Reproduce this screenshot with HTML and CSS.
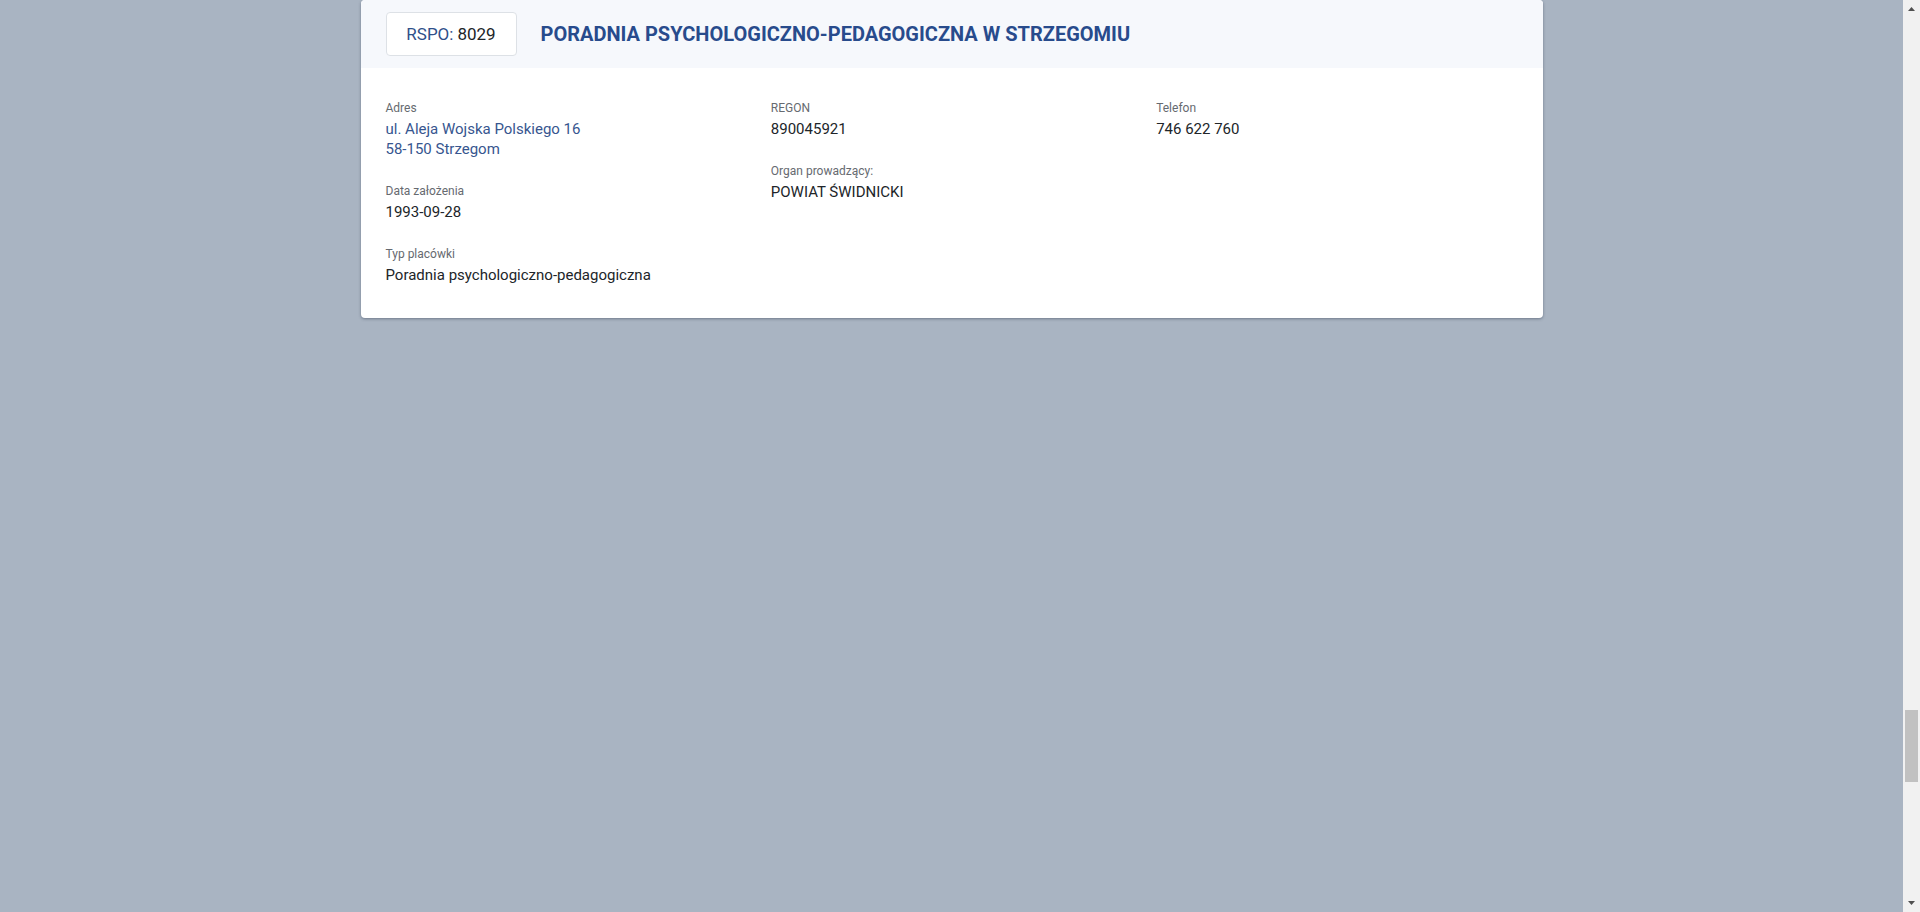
FILE: index.html
```html
<!DOCTYPE html>
<html lang="pl">
<head>
<meta charset="utf-8">
<title>Poradnia Psychologiczno-Pedagogiczna w Strzegomiu</title>
<link rel="stylesheet" href="styles.css">
</head>
<body>
<div class="page">
  <main class="container">
    <article class="card">
      <header class="card-head">
        <div class="rspo"><span class="rspo-label">RSPO:</span> 8029</div>
        <h1 class="title">PORADNIA PSYCHOLOGICZNO-PEDAGOGICZNA W STRZEGOMIU</h1>
      </header>
      <div class="card-body">
        <div class="col">
          <div class="field">
            <div class="label">Adres</div>
            <div class="value link">ul. Aleja Wojska Polskiego 16<br>58-150 Strzegom</div>
          </div>
          <div class="field">
            <div class="label">Data założenia</div>
            <div class="value">1993-09-28</div>
          </div>
          <div class="field">
            <div class="label">Typ placówki</div>
            <div class="value">Poradnia psychologiczno-pedagogiczna</div>
          </div>
        </div>
        <div class="col">
          <div class="field">
            <div class="label">REGON</div>
            <div class="value">890045921</div>
          </div>
          <div class="field">
            <div class="label">Organ prowadzący:</div>
            <div class="value">POWIAT ŚWIDNICKI</div>
          </div>
        </div>
        <div class="col">
          <div class="field">
            <div class="label">Telefon</div>
            <div class="value">746 622 760</div>
          </div>
        </div>
      </div>
    </article>
  </main>
</div>
<div class="scrollbar" aria-hidden="true">
  <div class="sb-btn">
    <svg width="17" height="17" viewBox="0 0 17 17"><path d="M5 11h7L8.5 7z" fill="#505050"/></svg>
  </div>
  <div class="sb-track">
    <div class="sb-thumb"></div>
  </div>
  <div class="sb-btn">
    <svg width="17" height="17" viewBox="0 0 17 17"><path d="M5 6h7L8.5 10z" fill="#505050"/></svg>
  </div>
</div>
</body>
</html>
```
FILE: styles.css
```css
html, body {
  margin: 0;
  padding: 0;
  height: 100%;
  overflow: hidden;
}
body {
  display: flex;
  background: #a9b4c2;
  font-family: Roboto, "Liberation Sans", Arial, sans-serif;
  color: #212529;
}
.page {
  flex: 1;
  min-width: 0;
}
.container {
  width: 1182px;
  margin: 0 auto;
}
.card {
  background: #fff;
  border-radius: 4px;
  box-shadow: 0 1px 3px rgba(40, 50, 70, 0.45);
  overflow: hidden;
}
.card-head {
  display: flex;
  align-items: center;
  gap: 24px;
  padding: 12px 25px;
  background: #f6f8fc;
}
.rspo {
  box-sizing: border-box;
  height: 44px;
  width: 131px;
  display: flex;
  align-items: center;
  justify-content: center;
  gap: 4px;
  border: 1px solid #dde1e6;
  border-radius: 4px;
  background: #fff;
  font-size: 17px;
  color: #212529;
}
.rspo-label {
  color: #2f4f8a;
}
.title {
  margin: 0;
  font-size: 20px;
  font-weight: 700;
  color: #284b8c;
}
.card-body {
  display: grid;
  grid-template-columns: repeat(3, 1fr);
  column-gap: 24px;
  padding: 32px 25px 33px;
}
.col {
  display: flex;
  flex-direction: column;
  gap: 24px;
}
.label {
  font-size: 12px;
  line-height: 16px;
  color: #666a70;
  margin-bottom: 3px;
}
.value {
  font-size: 15px;
  line-height: 20px;
  color: #212529;
}
.value.link {
  color: #37568f;
}
.scrollbar {
  width: 17px;
  height: 100vh;
  flex: none;
  display: flex;
  flex-direction: column;
  background: #f1f1f1;
}
.sb-btn {
  height: 17px;
  flex: none;
}
.sb-btn svg {
  display: block;
}
.sb-track {
  flex: 1;
}
.sb-thumb {
  margin: 693px 2px 0;
  height: 72px;
  background: #c1c1c1;
}
```
